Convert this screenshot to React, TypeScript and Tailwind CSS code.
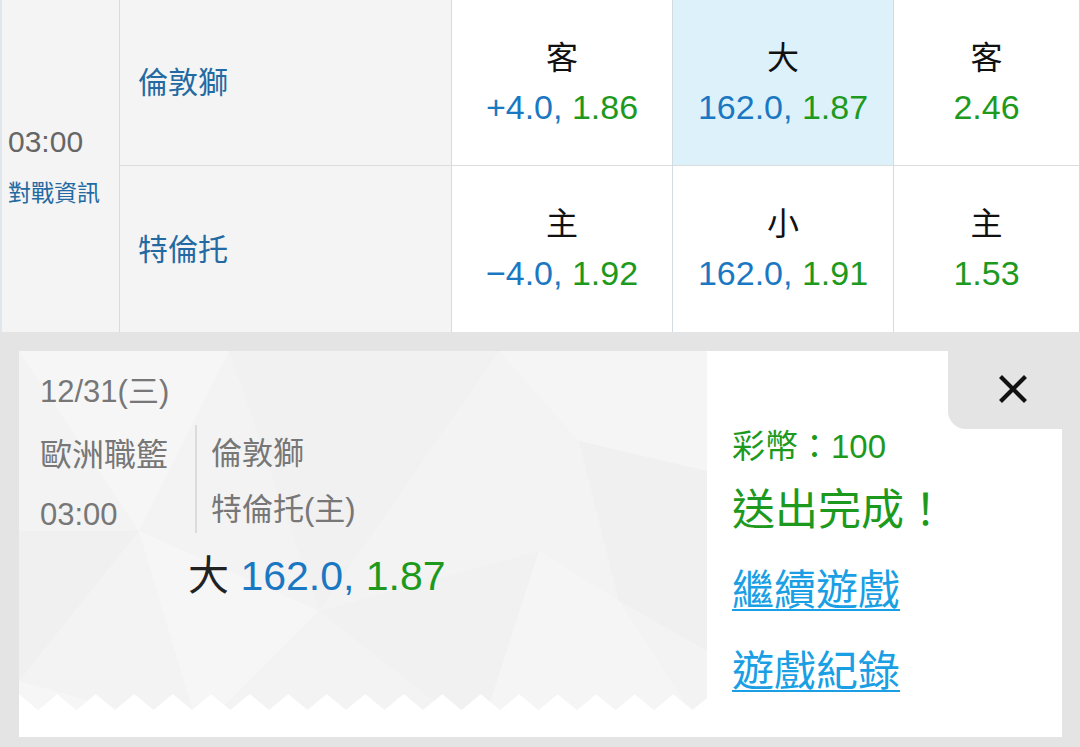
import React from "react";

interface Odds {
  label: string;
  line?: string;
  price: string;
  highlight?: boolean;
}

const rows: { team: string; odds: Odds[] }[] = [
  {
    team: "倫敦獅",
    odds: [
      { label: "客", line: "+4.0", price: "1.86" },
      { label: "大", line: "162.0", price: "1.87", highlight: true },
      { label: "客", price: "2.46" },
    ],
  },
  {
    team: "特倫托",
    odds: [
      { label: "主", line: "−4.0", price: "1.92" },
      { label: "小", line: "162.0", price: "1.91" },
      { label: "主", price: "1.53" },
    ],
  },
];

const OddsCell: React.FC<{ odds: Odds; bottom: boolean }> = ({ odds, bottom }) => (
  <div
    className={`flex flex-col items-center pt-[36px] border-r border-[#d3dbe2] ${
      bottom ? "" : "border-b border-b-[#dcdcdc]"
    } ${odds.highlight ? "bg-[#ddf1fb]" : "bg-white"}`}
  >
    <div className="text-[32px] leading-[44px] text-[#111]">{odds.label}</div>
    <div className="text-[34px] leading-[54px]">
      {odds.line && <span className="text-[#1a78c2]">{odds.line}, </span>}
      <span className="text-[#1d9a1d]">{odds.price}</span>
    </div>
  </div>
);

// low-poly background with a torn (zigzag) bottom edge
const TicketBg: React.FC = () => {
  let d = "M0 0 L0 343";
  for (let k = 0; k < 18; k++) {
    d += ` L${19 + 38.5 * k} 359 L${38.25 + 38.5 * k} 343`;
  }
  d += " L688 350 L688 0 Z";
  return (
    <svg className="absolute inset-0" width="688" height="386" viewBox="0 0 688 386">
      <defs>
        <clipPath id="torn">
          <path d={d} />
        </clipPath>
      </defs>
      <g clipPath="url(#torn)">
        <rect width="688" height="386" fill="#f3f3f3" />
        <polygon points="0,0 210,0 120,180" fill="#f6f6f6" />
        <polygon points="210,0 480,0 300,260" fill="#f1f1f1" />
        <polygon points="480,0 688,0 688,120 560,90" fill="#f5f5f5" />
        <polygon points="560,90 688,120 688,300 600,250" fill="#f0f0f0" />
        <polygon points="0,180 120,180 0,330" fill="#f0f0f0" />
        <polygon points="120,180 300,260 180,380" fill="#f6f6f6" />
        <polygon points="300,260 520,200 460,386" fill="#f1f1f1" />
        <polygon points="520,200 600,250 688,386 460,386" fill="#f5f5f5" />
        <polygon points="0,330 180,380 0,386" fill="#f6f6f6" />
      </g>
    </svg>
  );
};

const App: React.FC = () => {
  return (
    <div className="w-[1080px] h-[747px] overflow-hidden bg-[#e4e4e4] font-['Liberation_Sans','Noto_Sans_CJK_TC',sans-serif]">
      {/* Odds table */}
      <div className="grid grid-cols-[120px_332px_221px_221px_186px] grid-rows-[166px_166px] h-[332px]">
        <div className="row-span-2 bg-[#f4f4f4] border-l-2 border-l-[#dfe6ec] border-r border-[#d6dbe0] flex flex-col justify-center pl-[6px]">
          <div className="text-[30px] leading-[40px] text-[#666]">03:00</div>
          <div className="text-[23px] leading-[34px] text-[#236aa3] mt-[14px]">對戰資訊</div>
        </div>
        {rows.map((row, i) => (
          <React.Fragment key={row.team}>
            <div
              className={`bg-[#f4f4f4] flex items-center pl-[18px] border-r border-[#d6dbe0] ${
                i === 0 ? "border-b border-b-[#dcdcdc]" : ""
              }`}
            >
              <span className="text-[30px] text-[#236aa3]">{row.team}</span>
            </div>
            {row.odds.map((o, j) => (
              <OddsCell key={j} odds={o} bottom={i === 1} />
            ))}
          </React.Fragment>
        ))}
      </div>

      {/* Bet slip */}
      <div className="flex ml-[19px] mt-[19px] w-[1043px] h-[386px]">
        <div className="relative w-[688px] h-full bg-white">
          <TicketBg />
          <div className="relative pl-[21px] pt-[21px] text-[#777]">
            <div className="text-[31px] leading-[40px]">12/31(三)</div>
            <div className="flex mt-[13px]">
              <div className="w-[155px] h-[108px]">
                <div className="text-[32px] leading-[60px]">歐洲職籃</div>
                <div className="text-[31px] leading-[60px]">03:00</div>
              </div>
              <div className="border-l-2 border-[#dcdcdc] pl-[14px] h-[108px]">
                <div className="text-[31px] leading-[56px] mt-[1px]">倫敦獅</div>
                <div className="text-[31px] leading-[56px]">特倫托(主)</div>
              </div>
            </div>
            <div className="ml-[148px] mt-[18px] text-[41px] leading-[50px]">
              <span className="text-[#222]">大 </span>
              <span className="text-[#1a78c2]">162.0, </span>
              <span className="text-[#1d9a1d]">1.87</span>
            </div>
          </div>
        </div>

        <div className="flex-1 bg-white flex flex-col">
          <div className="flex justify-end h-[78px]">
            <div className="w-[114px] h-full bg-[#e4e4e4] rounded-bl-[18px] flex items-center justify-center pl-[16px] pb-[2px]">
              <svg width="28" height="28" viewBox="0 0 28 28">
                <path d="M3 3 L25 25 M25 3 L3 25" stroke="#111" strokeWidth="4.2" strokeLinecap="square" />
              </svg>
            </div>
          </div>
          <div className="pl-[25px] text-[#1d9a1d]">
            <div className="text-[33px] leading-[36px]">彩幣：100</div>
            <div className="text-[43px] leading-[56px] mt-[17px]">送出完成！</div>
            <div className="text-[42px] leading-[56px] mt-[25px] text-[#1a9fe4] underline underline-offset-[4px] decoration-2">
              繼續遊戲
            </div>
            <div className="text-[42px] leading-[56px] mt-[25px] text-[#1a9fe4] underline underline-offset-[4px] decoration-2">
              遊戲紀錄
            </div>
          </div>
        </div>
      </div>
    </div>
  );
};

export default App;
